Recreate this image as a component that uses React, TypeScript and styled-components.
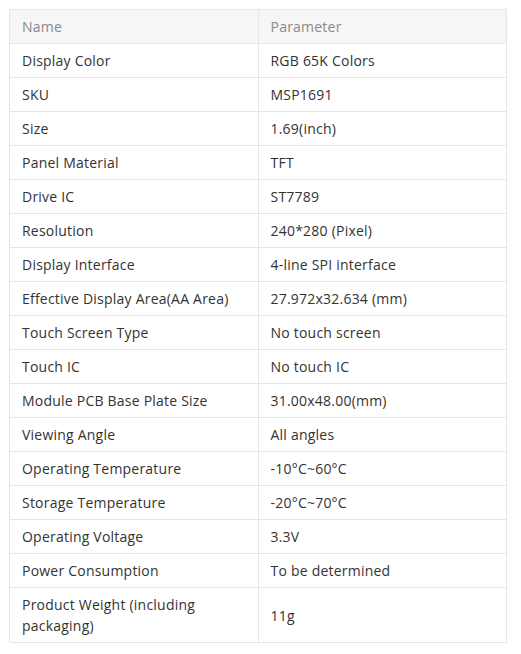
import styled, { createGlobalStyle } from 'styled-components';

const GlobalStyle = createGlobalStyle`
  body {
    margin: 0;
    background: #fff;
    font-family: 'Open Sans', 'Noto Sans', sans-serif;
  }
`;

const Page = styled.div`
  padding: 9px 14px 0 9px;
`;

const Table = styled.table`
  width: 498px;
  border-collapse: collapse;
  table-layout: fixed;
  font-size: 14px;
  line-height: 21px;
  letter-spacing: 0.22px;
  color: #333;
`;

const Cell = styled.td<{ $head?: boolean }>`
  border: 1px solid #e6e6e6;
  padding: 6px 12px;
  vertical-align: middle;
  background: ${(p) => (p.$head ? '#f6f6f6' : '#fff')};
  color: ${(p) => (p.$head ? '#8a8a8a' : '#333')};
`;

const rows: [string, string][] = [
  ['Display Color', 'RGB 65K Colors'],
  ['SKU', 'MSP1691'],
  ['Size', '1.69(inch)'],
  ['Panel Material', 'TFT'],
  ['Drive IC', 'ST7789'],
  ['Resolution', '240*280 (Pixel)'],
  ['Display Interface', '4-line SPI interface'],
  ['Effective Display Area(AA Area)', '27.972x32.634 (mm)'],
  ['Touch Screen Type', 'No touch screen'],
  ['Touch IC', 'No touch IC'],
  ['Module PCB Base Plate Size', '31.00x48.00(mm)'],
  ['Viewing Angle', 'All angles'],
  ['Operating Temperature', '-10°C~60°C'],
  ['Storage Temperature', '-20°C~70°C'],
  ['Operating Voltage', '3.3V'],
  ['Power Consumption', 'To be determined'],
  ['Product Weight (including packaging)', '11g'],
];

const App = () => {
  return (
    <Page>
      <GlobalStyle />
      <Table>
        <tbody>
          <tr>
            <Cell $head>Name</Cell>
            <Cell $head>Parameter</Cell>
          </tr>
          {rows.map(([name, value]) => (
            <tr key={name}>
              <Cell>{name}</Cell>
              <Cell>{value}</Cell>
            </tr>
          ))}
        </tbody>
      </Table>
    </Page>
  );
};

export default App;
